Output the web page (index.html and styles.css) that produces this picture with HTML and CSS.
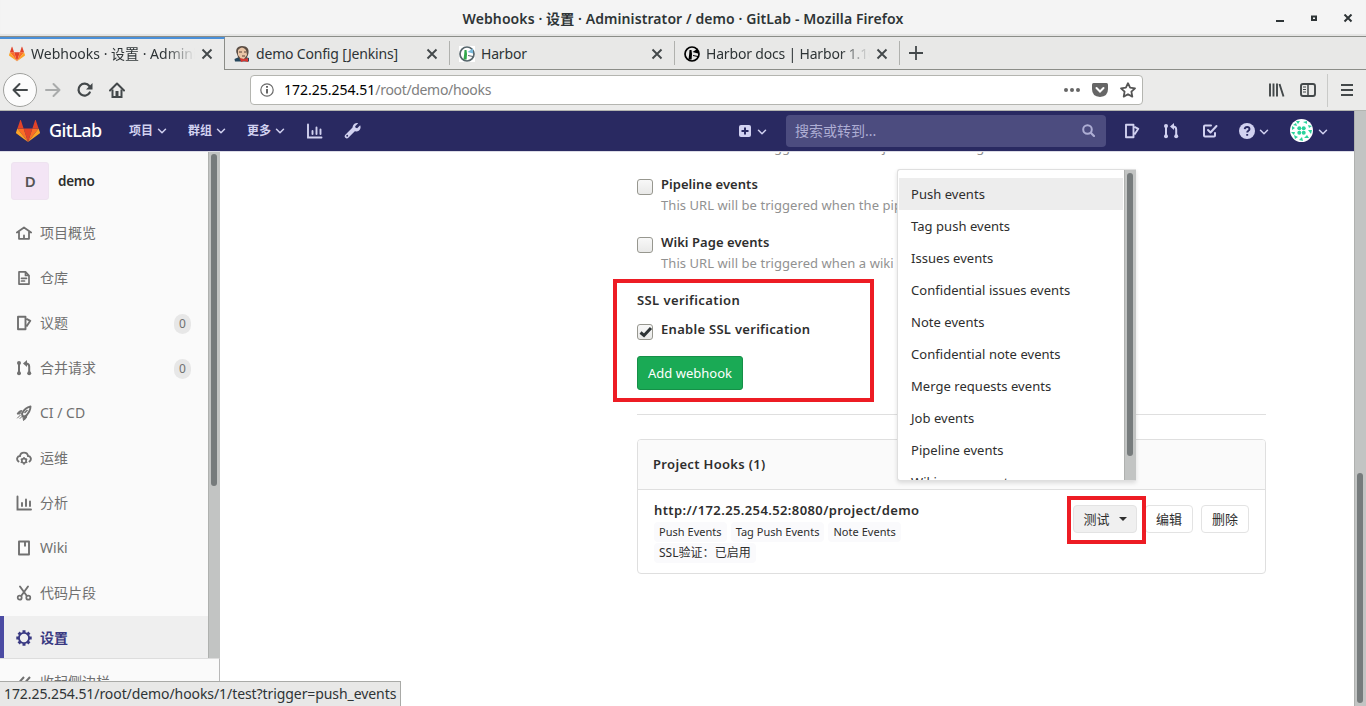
FILE: index.html
```html
<!DOCTYPE html>
<html lang="zh-CN">
<head>
<meta charset="utf-8">
<title>Webhooks · 设置 · Administrator / demo · GitLab</title>
<link rel="stylesheet" href="styles.css">
</head>
<body>
<svg class="defs" width="0" height="0">
  <symbol id="chev" viewBox="0 0 10 10"><path d="M1.500 3.200 5 6.700 8.500 3.200" fill="none" stroke="currentColor" stroke-width="1.500" stroke-linecap="round" stroke-linejoin="round"/></symbol>
  <symbol id="close" viewBox="0 0 12 12"><path d="M1.500 1.500l9 9M10.500 1.500l-9 9" stroke="currentColor" stroke-width="1.900"/></symbol>
  <symbol id="tanuki" viewBox="0 0 24 22"><path fill="#e24329" d="M12 22 7.600 8.400h8.800z"/><path fill="#fc6d26" d="M12 22 7.600 8.400H1.400zM12 22l4.400-13.600h6.200z"/><path fill="#fca326" d="M1.400 8.400 0 12.500c-.1.400 0 .8.400 1L12 22zM22.600 8.400l1.400 4.100c.1.400 0 .8-.4 1L12 22z"/><path fill="#e24329" d="M1.400 8.400h6.200L5 .4c-.1-.4-.7-.4-.9 0zM22.600 8.400h-6.200L19 .4c.1-.4.7-.4.9 0z"/></symbol>
  <symbol id="chart" viewBox="0 0 16 16"><path d="M1.500 1.500v13h13.500M6 11V8M10 11V4.500M14 11V6.500" fill="none" stroke="currentColor" stroke-width="1.900" stroke-linecap="round"/></symbol>
  <symbol id="issues" viewBox="0 0 16 16"><path d="M2 1.800h7.500v12.500H2zM10.500 3.800l3.800 2-3.800 5.700" fill="none" stroke="currentColor" stroke-width="1.900" stroke-linejoin="round"/></symbol>
  <symbol id="merge" viewBox="0 0 16 16"><path d="M3 3v10M13.200 13V6.500q0-3-3.500-3" fill="none" stroke="currentColor" stroke-width="2"/><path d="M11 0v7L7 3.500z" fill="currentColor"/><circle cx="3" cy="3" r="2" fill="currentColor"/><circle cx="3" cy="13.300" r="2" fill="currentColor"/><circle cx="13.200" cy="13.300" r="2" fill="currentColor"/></symbol>
  <symbol id="harbor" viewBox="0 0 16 16"><circle cx="8" cy="8" r="7" fill="none" stroke="currentColor" stroke-width="1.700"/><path d="M5.200 8 5.500 4h2l.5 4-.4 5.500H4.500z" class="harbor-tower"/><path d="M8.500 6l5.500-3.500v5z" class="harbor-beam"/><path d="M9 9.500l5 1" stroke="currentColor"/></symbol>
</svg>

<header class="titlebar">
  <span class="window-title">Webhooks · 设置 · Administrator / demo · GitLab - Mozilla Firefox</span>
  <svg class="window-buttons" width="82" height="14" viewBox="0 0 82 14"><path d="M2 7h8" stroke="#2e3436" stroke-width="2"/><path d="M38 2.500h4v3.500h-4z" fill="none" stroke="#2e3436" stroke-width="2"/><path d="M70.500 .500l7 7M77.500 .500l-7 7" stroke="#2e3436" stroke-width="2"/></svg>
</header>

<div class="tabs">
  <div class="tab tab-active">
    <svg width="16" height="16"><use href="#tanuki" width="16" height="16"/></svg>
    <span class="tab-title fade">Webhooks · 设置 · Administrator</span><svg class="tab-close"><use href="#close"/></svg>
  </div>
  <div class="tab">
    <svg width="16" height="16" viewBox="0 0 16 16"><path d="M1 15.500 .5 13 5 11h6l4 1v3.500z" fill="#25465c"/><path d="M3 8C1 4 3 0 8 0s8 3 6 9l-2 4-6 1-2-3z" fill="#5b4d43"/><path d="M4 4q4-5 8 0l1 5-3 4H7L4 9z" fill="#e9c4a5"/><path d="M5 6h3M10 6h2M8 10h3" stroke="#5a4034"/><path d="M6 12l4 1 4-1v4l-4-1-3 1z" fill="#d33833"/></svg>
    <span class="tab-title">demo Config [Jenkins]</span><svg class="tab-close"><use href="#close"/></svg>
  </div>
  <div class="tab">
    <svg class="harbor-color" width="16" height="16"><use href="#harbor"/></svg>
    <span class="tab-title">Harbor</span><svg class="tab-close"><use href="#close"/></svg>
  </div>
  <div class="tab">
    <svg class="harbor-mono" width="16" height="16"><use href="#harbor"/></svg>
    <span class="tab-title fade">Harbor docs | Harbor 1.10 docs</span><svg class="tab-close"><use href="#close"/></svg>
  </div>
  <svg class="new-tab" width="14" height="14" viewBox="0 0 14 14"><path d="M7 0v14M0 7h14" stroke="#43484a" stroke-width="1.800"/></svg>
</div>

<div class="toolbar">
  <span class="back"><svg width="16" height="16" viewBox="0 0 16 16"><path d="M15 8H1.500M7.500 2 1.500 8l6 6" fill="none" stroke="currentColor" stroke-width="2" stroke-linecap="round" stroke-linejoin="round"/></svg></span>
  <svg class="forward" width="16" height="16" viewBox="0 0 16 16"><path d="M1 8h13.500M8.500 2l6 6-6 6" fill="none" stroke="currentColor" stroke-width="2" stroke-linecap="round" stroke-linejoin="round"/></svg>
  <svg class="reload" width="16" height="16" viewBox="0 0 16 16"><path d="M12.800 10.500A6 6 0 1 1 12.300 4" fill="none" stroke="currentColor" stroke-width="2.200" stroke-linecap="round"/><path d="M15.500 1v6.500H9z" fill="currentColor"/></svg>
  <svg class="home" width="16" height="16" viewBox="0 0 16 16"><path d="M1 8.500 8 1.500l7 7" fill="none" stroke="currentColor" stroke-width="2" stroke-linecap="round" stroke-linejoin="round"/><path d="M3.500 7.500V15h9V7.500" fill="none" stroke="currentColor" stroke-width="2"/><path d="M6.500 9h3v6h-3z" fill="currentColor"/></svg>
  <div class="urlbar">
    <svg width="14" height="14" viewBox="0 0 14 14"><circle cx="7" cy="7" r="6.200" fill="none" stroke="#6a6a6a" stroke-width="1.200"/><path d="M7 6v4.500M7 3v1.800" stroke="#555" stroke-width="1.800"/></svg>
    <span class="url"><b>172.25.254.51</b>/root/demo/hooks</span>
    <svg class="url-icons" width="72" height="16" viewBox="0 0 72 16" fill="#666"><circle cx="2" cy="8" r="2"/><circle cx="8" cy="8" r="2"/><circle cx="14" cy="8" r="2"/><path d="M29.500 1h13q1.500 0 1.500 1.500V7q0 7.500-8 8-8-.5-8-8V2.500Q28 1 29.500 1z"/><path d="M32.500 6l3.500 3.500L39.500 6" fill="none" stroke="#fff" stroke-width="2" stroke-linecap="round"/><path d="M64 1.200l2.100 4.500 4.900.6-3.600 3.400.9 4.900-4.300-2.400-4.300 2.400.9-4.900L57 6.300l4.900-.6z" fill="none" stroke="#555" stroke-width="1.800" stroke-linejoin="round"/></svg>
  </div>
  <svg class="toolbar-icons" width="50" height="16" viewBox="0 0 50 16" fill="none" stroke="#43484a" stroke-width="1.900"><path d="M3 1.500v13M6.500 1.500v13M10 1.500v13M12.500 2l4 12.500"/><rect x="34" y="2" width="14" height="12" rx="2"/><path d="M41 2v12" stroke-width="1.500"/><path d="M36 5h3M36 7.500h3M36 10h3" stroke-width="1"/></svg>
  <span class="toolbar-sep"></span>
  <svg width="12" height="12" viewBox="0 0 12 12"><path d="M0 1h12M0 6h12M0 11h12" stroke="#43484a" stroke-width="1.900"/></svg>
</div>

<div class="viewport">
  <div class="page">
    <nav class="navbar">
      <svg class="logo" width="24" height="22"><use href="#tanuki"/></svg>
      <span class="brand">GitLab</span>
      <span class="menu">项目<svg class="chev"><use href="#chev"/></svg></span>
      <span class="menu">群组<svg class="chev"><use href="#chev"/></svg></span>
      <span class="menu">更多<svg class="chev"><use href="#chev"/></svg></span>
      <svg class="nav-chart" width="17" height="16"><use href="#chart"/></svg>
      <svg class="nav-wrench" width="17" height="17" viewBox="0 0 16 16"><path d="M2.700 13.300 9 7" stroke="currentColor" stroke-width="4" stroke-linecap="round"/><path d="M13.300 1.200 10.500 4l.4 1.400 1.500.4 2.800-2.800c.9 2.300.2 4.300-1.300 5.300-1.400 1-3.300 1-4.700-.2C7.800 6.800 7.700 4.500 8.800 2.800c.9-1.400 2.800-2.200 4.500-1.600z" fill="currentColor"/><circle cx="3" cy="13" r=".9" fill="#292961"/></svg>
      <span class="nav-spacer"></span>
      <svg class="nav-plus" width="12" height="12" viewBox="0 0 12 12"><rect width="12" height="12" rx="2" fill="currentColor"/><path d="M6 2.500v7M2.500 6h7" stroke="#292961" stroke-width="2"/></svg>
      <svg class="chev chev-plus"><use href="#chev"/></svg>
      <div class="search"><span>搜索或转到...</span><svg width="13" height="13" viewBox="0 0 13 13"><circle cx="5.500" cy="5.500" r="4.300" fill="none" stroke="currentColor" stroke-width="2"/><path d="M9 9l3 3" stroke="currentColor" stroke-width="2.200" stroke-linecap="round"/></svg></div>
      <svg class="nav-icon" width="16" height="16"><use href="#issues"/></svg>
      <svg class="nav-icon nav-merge" width="16" height="16"><use href="#merge"/></svg>
      <svg class="nav-icon nav-todo" width="16" height="16" viewBox="0 0 16 16"><path d="M9 2.500H3q-1 0-1 1v9q0 1 1 1h9q1 0 1-1V10M6 7l2.500 2.500L14.500 3" fill="none" stroke="currentColor" stroke-width="2" stroke-linecap="round" stroke-linejoin="round"/></svg>
      <svg class="nav-help" width="16" height="16" viewBox="0 0 16 16"><circle cx="8" cy="8" r="8" fill="currentColor"/><path d="M5.700 6.200Q6 4 8.200 4t2.300 2Q10.500 7 9.300 7.800 8.200 8.400 8.200 9.500M8.200 11v1.800" fill="none" stroke="#292961" stroke-width="1.900"/></svg>
      <svg class="chev chev-help"><use href="#chev"/></svg>
      <svg class="avatar" width="23" height="23" viewBox="0 0 23 23"><circle cx="11.500" cy="11.500" r="11.500" fill="#fff"/><g fill="#2bd39b"><circle cx="9.300" cy="9.300" r="2"/><circle cx="13.700" cy="9.300" r="2"/><circle cx="9.300" cy="13.700" r="2"/><circle cx="13.700" cy="13.700" r="2"/><path d="M6 2l4 0-2 3zM13 3l4-1 0 3zM18 6l4 1-3 2zM18 11l4 0-1 4zM17 16l2 3-5 0zM12 18l1 4-4-1zM8 18l-3 2-1-4zM5 13l-1 3-3-3zM5 9l-3 2 0-4zM3 6l3-2 1 3z"/></g></svg>
      <svg class="chev chev-user"><use href="#chev"/></svg>
    </nav>

    <div class="body">
      <aside class="sidebar">
        <div class="side-scroll">
          <div class="side-list">
            <div class="project"><span class="project-avatar">D</span><b>demo</b></div>
            <div class="side-item"><svg class="side-icon" viewBox="0 0 16 16"><path d="M.9 7.500 8 2.500l7.100 5M3 7v6.800h10V7M8 10.500v3" fill="none" stroke="currentColor" stroke-width="1.800" stroke-linecap="round" stroke-linejoin="round"/></svg>项目概览</div>
            <div class="side-item"><svg class="side-icon" viewBox="0 0 16 16"><path d="M3 1.900h6.500L13 5.500v8.600H3zM9.500 2v3.500H13M5.500 8.300h5M5.500 11h3" fill="none" stroke="currentColor" stroke-width="1.700" stroke-linecap="round" stroke-linejoin="round"/></svg>仓库</div>
            <div class="side-item"><svg class="side-icon"><use href="#issues"/></svg>议题<span class="count">0</span></div>
            <div class="side-item"><svg class="side-icon"><use href="#merge"/></svg>合并请求<span class="count">0</span></div>
            <div class="side-item"><svg class="side-icon" viewBox="0 0 16 16"><path d="M6 8.500Q9 2.500 14.500 1.500 14.500 7 9 11.500L6.500 11z" fill="none" stroke="currentColor" stroke-width="1.900" stroke-linejoin="round"/><path d="M5.500 5.500Q2.500 5.500 1 9l2.500 0zM11 10.500q0 3-3.500 5l-.5-3zM4.500 10 1.500 13M6 11.500 4 13.500" fill="currentColor" stroke="currentColor" stroke-linecap="round"/><path d="M8.500 8l3-3" stroke="currentColor" stroke-width="1.500"/></svg>CI / CD</div>
            <div class="side-item"><svg class="side-icon" viewBox="0 0 16 16"><path d="M2.500 11.500C0 9.500 1.200 6 4 6c.5-4.500 7.500-4.500 8 0 2.800 0 4 3.500 1.500 5.500" fill="none" stroke="currentColor" stroke-width="1.900" stroke-linecap="round"/><circle cx="8" cy="10.800" r="2.200" fill="none" stroke="currentColor" stroke-width="1.700"/><path d="M8 7v1.500M8 13v1.800M4.800 8.900l1.300.8M10 12l1.300.7M11.200 8.900l-1.300.8M6 12l-1.300.7" stroke="currentColor" stroke-width="1.400"/></svg>运维</div>
            <div class="side-item"><svg class="side-icon"><use href="#chart"/></svg>分析</div>
            <div class="side-item"><svg class="side-icon" viewBox="0 0 16 16"><path d="M3 1.500h10v13H3zM9 2v4.500" fill="none" stroke="currentColor" stroke-width="1.900" stroke-linejoin="round"/></svg>Wiki</div>
            <div class="side-item"><svg class="side-icon" viewBox="0 0 16 16"><path d="M4 1.500l6.500 9M12 1.500l-6.500 9" stroke="currentColor" stroke-width="1.900" stroke-linecap="round"/><circle cx="3.700" cy="12.700" r="2" fill="none" stroke="currentColor" stroke-width="1.700"/><circle cx="12.300" cy="12.700" r="2" fill="none" stroke="currentColor" stroke-width="1.700"/></svg>代码片段</div>
            <div class="side-item side-active"><svg class="side-icon" viewBox="0 0 16 16"><circle cx="8" cy="8" r="5.100" fill="none" stroke="currentColor" stroke-width="1.900"/><path d="M8 .3v2.500M8 13.200v2.500M.3 8h2.500M13.200 8h2.500M2.600 2.600l1.700 1.700M11.700 11.700l1.700 1.700M13.400 2.600l-1.700 1.700M4.300 11.700l-1.700 1.700" stroke="currentColor" stroke-width="3"/></svg>设置</div>
          </div>
          <div class="scrollbar"><span class="thumb side-thumb"></span></div>
        </div>
        <div class="collapse"><svg class="side-icon" viewBox="0 0 16 16"><path d="M8 3 3.500 8 8 13M14 3 9.500 8l4.500 5" fill="none" stroke="currentColor" stroke-width="2"/></svg>收起侧边栏</div>
      </aside>

      <main class="content">
        <p class="hint hint-cut">This URL will be triggered when the job status changes</p>
        <div class="check-row"><span class="checkbox"></span><div><b>Pipeline events</b><p class="hint">This URL will be triggered when the pipeline status changes</p></div></div>
        <div class="check-row"><span class="checkbox"></span><div><b>Wiki Page events</b><p class="hint">This URL will be triggered when a wiki page is created/updated</p></div></div>
        <b class="ssl-title">SSL verification</b>
        <div class="check-row ssl-row"><span class="checkbox"><svg width="16" height="16" viewBox="0 0 16 16"><path d="M3.500 8.500 7 11.500 14 4" fill="none" stroke="#2e3436" stroke-width="3"/></svg></span><b class="ssl-label">Enable SSL verification</b></div>
        <span class="btn-add">Add webhook</span>
        <div class="divider"></div>
        <section class="card">
          <div class="card-head">Project Hooks (1)</div>
          <div class="hook">
            <div class="hook-info">
              <b class="hook-url">http://172.25.254.52:8080/project/demo</b>
              <div class="badges"><span>Push Events</span><span>Tag Push Events</span><span>Note Events</span></div>
              <div class="badges badge-ssl"><span>SSL验证：已启用</span></div>
            </div>
            <div class="hook-actions"><span class="btn btn-test">测试<i class="caret"></i></span><span class="btn">编辑</span><span class="btn">删除</span></div>
          </div>
        </section>

        <div class="dropdown">
          <ul><li class="hover">Push events</li><li>Tag push events</li><li>Issues events</li><li>Confidential issues events</li><li>Note events</li><li>Confidential note events</li><li>Merge requests events</li><li>Job events</li><li>Pipeline events</li><li>Wiki page events</li></ul>
          <div class="scrollbar"><span class="thumb menu-thumb"></span></div>
        </div>
        <div class="mark mark-ssl"></div>
        <div class="mark mark-test"></div>
      </main>
    </div>
  </div>
  <div class="scrollbar page-scrollbar"><span class="thumb page-thumb"></span></div>
</div>
<div class="status">172.25.254.51/root/demo/hooks/1/test?trigger=push_events</div>
</body>
</html>
```
FILE: styles.css
```css
* { box-sizing: border-box; }
body { margin: 0; height: 706px; display: flex; flex-direction: column; overflow: hidden; position: relative; background: #fff; color: #2e2e2e; font: 13px/18px "Noto Sans", "Noto Sans CJK SC", sans-serif; }
svg { display: block; flex: none; }
.defs { position: absolute; }
p, ul { margin: 0; padding: 0; list-style: none; }
b { font-weight: 600; }

.titlebar { height: 37px; flex: none; display: flex; align-items: center; justify-content: center; position: relative; background: #f4f4f4; border-bottom: 1px solid #8b8d88; box-shadow: inset 0 -2px 1px #e4e4e3; }
.window-title { padding-top: 1px; font-size: 14px; font-weight: 600; letter-spacing: .09px; color: #2e3436; white-space: nowrap; }
.window-buttons { position: absolute; right: 10px; top: 14px; }

.tabs { height: 33px; flex: none; display: flex; align-items: center; background: #e8e8e7; border-bottom: 1px solid #8b8d88; font-size: 14px; color: #2e3436; }
.tab { width: 225px; height: 24px; padding: 2px 11px 0 9px; display: flex; align-items: center; gap: 6px; border-right: 1px solid #b0b1ae; }
.tab-active { height: 33px; margin-bottom: -1px; padding-top: 0; padding-bottom: 1px; border-top: 2px solid #4a90d9; border-right-color: #8b8d88; background: #ebebea; }
.tab-title { flex: 1; overflow: hidden; white-space: nowrap; line-height: 20px; letter-spacing: -.18px; }
.tab-active .tab-title { letter-spacing: 0; }
.fade { -webkit-mask-image: linear-gradient(90deg, #000 calc(100% - 30px), transparent); mask-image: linear-gradient(90deg, #000 calc(100% - 30px), transparent); }
.tab-close { width: 12px; height: 12px; color: #43484a; }
.harbor-color { background: #fff; color: #57666c; --tower: #32a84b; --beam: #78b9dc; }
.harbor-mono { color: #000; --tower: #000; --beam: #000; }
.harbor-tower { fill: var(--tower); }
.harbor-beam { fill: var(--beam); }
.new-tab { margin-left: 9px; }

.toolbar { height: 41px; flex: none; display: flex; align-items: center; padding-left: 3px; background: #ebebea; border-bottom: 1px solid #b3b4b0; color: #43484a; }
.back { width: 34px; height: 34px; border: 1px solid #a0a19e; border-radius: 50%; background: #fcfcfc; display: grid; place-items: center; }
.forward { margin-left: 8px; color: #a9abab; }
.reload, .home { margin-left: 16px; }
.urlbar { width: 893px; height: 30px; margin-left: 125px; padding: 0 6px 0 9px; border: 1px solid #b4b5b0; border-radius: 4px; background: #fff; display: flex; align-items: center; }
.url { flex: 1; margin-left: 10px; font-size: 14px; letter-spacing: -.33px; color: #808080; }
.url b { color: #000; font-weight: 400; letter-spacing: 0; }
.toolbar-icons { margin-left: 124px; }
.toolbar-sep { width: 1px; height: 33px; margin: 0 13px 0 10px; background: #c9cac8; }

.viewport { flex: 1; min-height: 0; display: flex; }
.page { width: 1354px; display: flex; flex-direction: column; }
.navbar { height: 41px; flex: none; display: flex; align-items: center; padding: 0 0 1px 16px; background: #292961; border-bottom: 1px solid #dcdce6; color: #d1d1f0; }
.brand { width: 80px; margin-left: 9px; padding-bottom: 2px; font-size: 18px; font-weight: 500; letter-spacing: -.55px; color: #fff; }
.menu { width: 59px; display: flex; align-items: center; gap: 4px; font: 700 12px/16px "Noto Sans CJK SC", sans-serif; padding-bottom: 1px; }
.chev { width: 10px; height: 10px; position: relative; top: 1px; }
.nav-chart { margin-left: 0; }
.nav-wrench { margin-left: 21px; }
.nav-spacer { flex: 1; }
.chev-plus { margin: 0 19px 0 6px; }
.search { width: 320px; height: 32px; margin-right: 18px; padding: 0 11px 0 9px; border-radius: 4px; background: #4c4c7f; display: flex; align-items: center; justify-content: space-between; font-size: 14px; color: #aeaed4; }
.nav-merge { margin-left: 23px; }
.nav-todo { margin-left: 23px; }
.nav-help { margin-left: 21px; }
.chev-help { margin: 0 21px 0 4px; }
.chev-user { margin: 0 26px 0 5px; }

.body { flex: 1; min-height: 0; display: flex; }
.sidebar { width: 220px; flex: none; display: flex; flex-direction: column; background: #fafafa; font-size: 14px; color: #707070; }
.side-scroll { height: 506px; display: flex; overflow: hidden; }
.side-list { width: 208px; }
.project { height: 59px; padding: 0 0 1px 11px; display: flex; align-items: center; gap: 9px; font-size: 13.500px; letter-spacing: -.3px; color: #2e2e2e; }
.project-avatar { width: 38px; height: 38px; border-radius: 3px; background: #f3e5f5; border: 1px solid #eee3f0; display: grid; place-items: center; font-size: 15px; font-weight: 600; color: #555; }
.side-item { height: 45px; padding: 0 17px 2px 16px; display: flex; align-items: center; }
.side-icon { width: 16px; height: 16px; margin-right: 8px; }
.side-item .count { margin: 2px 0 0 auto; width: 17px; height: 20px; border-radius: 10px; background: #e7e7e7; text-align: center; font-size: 12px; line-height: 19px; }
.side-active { padding-left: 12px; border-left: 4px solid #4b4ba3; background: #efefef; color: #393982; font-weight: 600; }
.collapse { height: 48px; padding: 0 0 2px 16px; display: flex; align-items: center; border-top: 1px solid #ddd; border-right: 1px solid #b8b8b8; }
.scrollbar { width: 12px; flex: none; padding: 3px 3px 3px 2px; border-left: 1px solid #afb1af; background: #c2c4c3; }
.thumb { display: block; width: 6px; border-radius: 3px; background: #767b7c; }
.side-thumb { height: 332px; margin-top: -1px; }
.menu-thumb { height: 283px; }
.page-thumb { height: 230px; margin-top: 359px; }

.content { width: 1134px; position: relative; padding: 0 88px 0 417px; overflow: hidden; }
.hint { color: #919191; line-height: 20px; letter-spacing: .06px; white-space: nowrap; }
.hint-cut { margin: -15px 0 16px 24px; }
.check-row { height: 58px; display: flex; gap: 8px; white-space: nowrap; }
.check-row b, .ssl-title { display: block; line-height: 22px; letter-spacing: .05px; }
.checkbox { width: 16px; height: 16px; flex: none; margin-top: 6px; border: 1px solid #97978f; border-radius: 3px; background: linear-gradient(#f8f8f8, #e9e9e8); }
.checkbox svg { margin: -1px; }
.ssl-title { height: 29px; letter-spacing: .4px; }
.check-row .ssl-label { letter-spacing: .29px; }
.ssl-row { height: 38px; }
.btn-add { display: block; width: 106px; height: 34px; border: 1px solid #168f48; border-radius: 3px; background: #1aaa55; color: #fff; line-height: 32px; text-align: center; }
.divider { height: 1px; margin: 24px 0; background: #dfdfdf; }
.card { height: 135px; border: 1px solid #dfdfdf; border-radius: 4px; }
.card-head { height: 50px; padding-left: 15px; background: #fafafa; border-bottom: 1px solid #dfdfdf; border-radius: 3px 3px 0 0; font-weight: 600; letter-spacing: .33px; line-height: 48px; }
.hook { display: flex; justify-content: space-between; padding: 10px 16px 0; }
.hook-url { display: block; line-height: 20px; height: 22px; letter-spacing: .39px; }
.badges { display: flex; gap: 4px; margin-bottom: 1px; }
.badges span { height: 20px; padding: 0 5px; border-radius: 4px; background: #fafafc; font-size: 11px; line-height: 19px; letter-spacing: .03px; }
.badge-ssl span { font-size: 12px; }
.hook-actions { display: flex; gap: 8px; padding-top: 5px; }
.btn { width: 48px; height: 28px; padding-bottom: 1px; border: 1px solid #e3e3e3; border-radius: 4px; display: flex; align-items: center; justify-content: center; }
.btn-test { width: 64px; gap: 9px; background: #f0f0f0; }
.caret { border: 4px solid transparent; border-top-color: #2e2e2e; border-bottom: 0; }

.dropdown { position: absolute; left: 677px; top: 17px; width: 239px; height: 312px; display: flex; overflow: hidden; background: #fff; border: 1px solid #dfdfdf; border-right: 0; border-radius: 3px 0 0 3px; box-shadow: 0 2px 4px rgba(0,0,0,.13); }
.dropdown ul { flex: 1; padding: 8px 1px 0; }
.dropdown li { height: 32px; padding-left: 12px; line-height: 32px; letter-spacing: .04px; }
.hover { background: #ededed; }
.mark { position: absolute; border: 4px solid #ed1c24; }
.mark-ssl { left: 393px; top: 127px; width: 261px; height: 123px; }
.mark-test { left: 847px; top: 344px; width: 79px; height: 48px; }
.status { position: absolute; left: 0; bottom: 0; width: 401px; height: 25px; padding-left: 4px; border: solid #a9aaa7; border-width: 1px 1px 0 0; background: #e8e8e7; color: #2e3436; font-size: 14px; line-height: 23px; letter-spacing: -.08px; white-space: nowrap; }
```
